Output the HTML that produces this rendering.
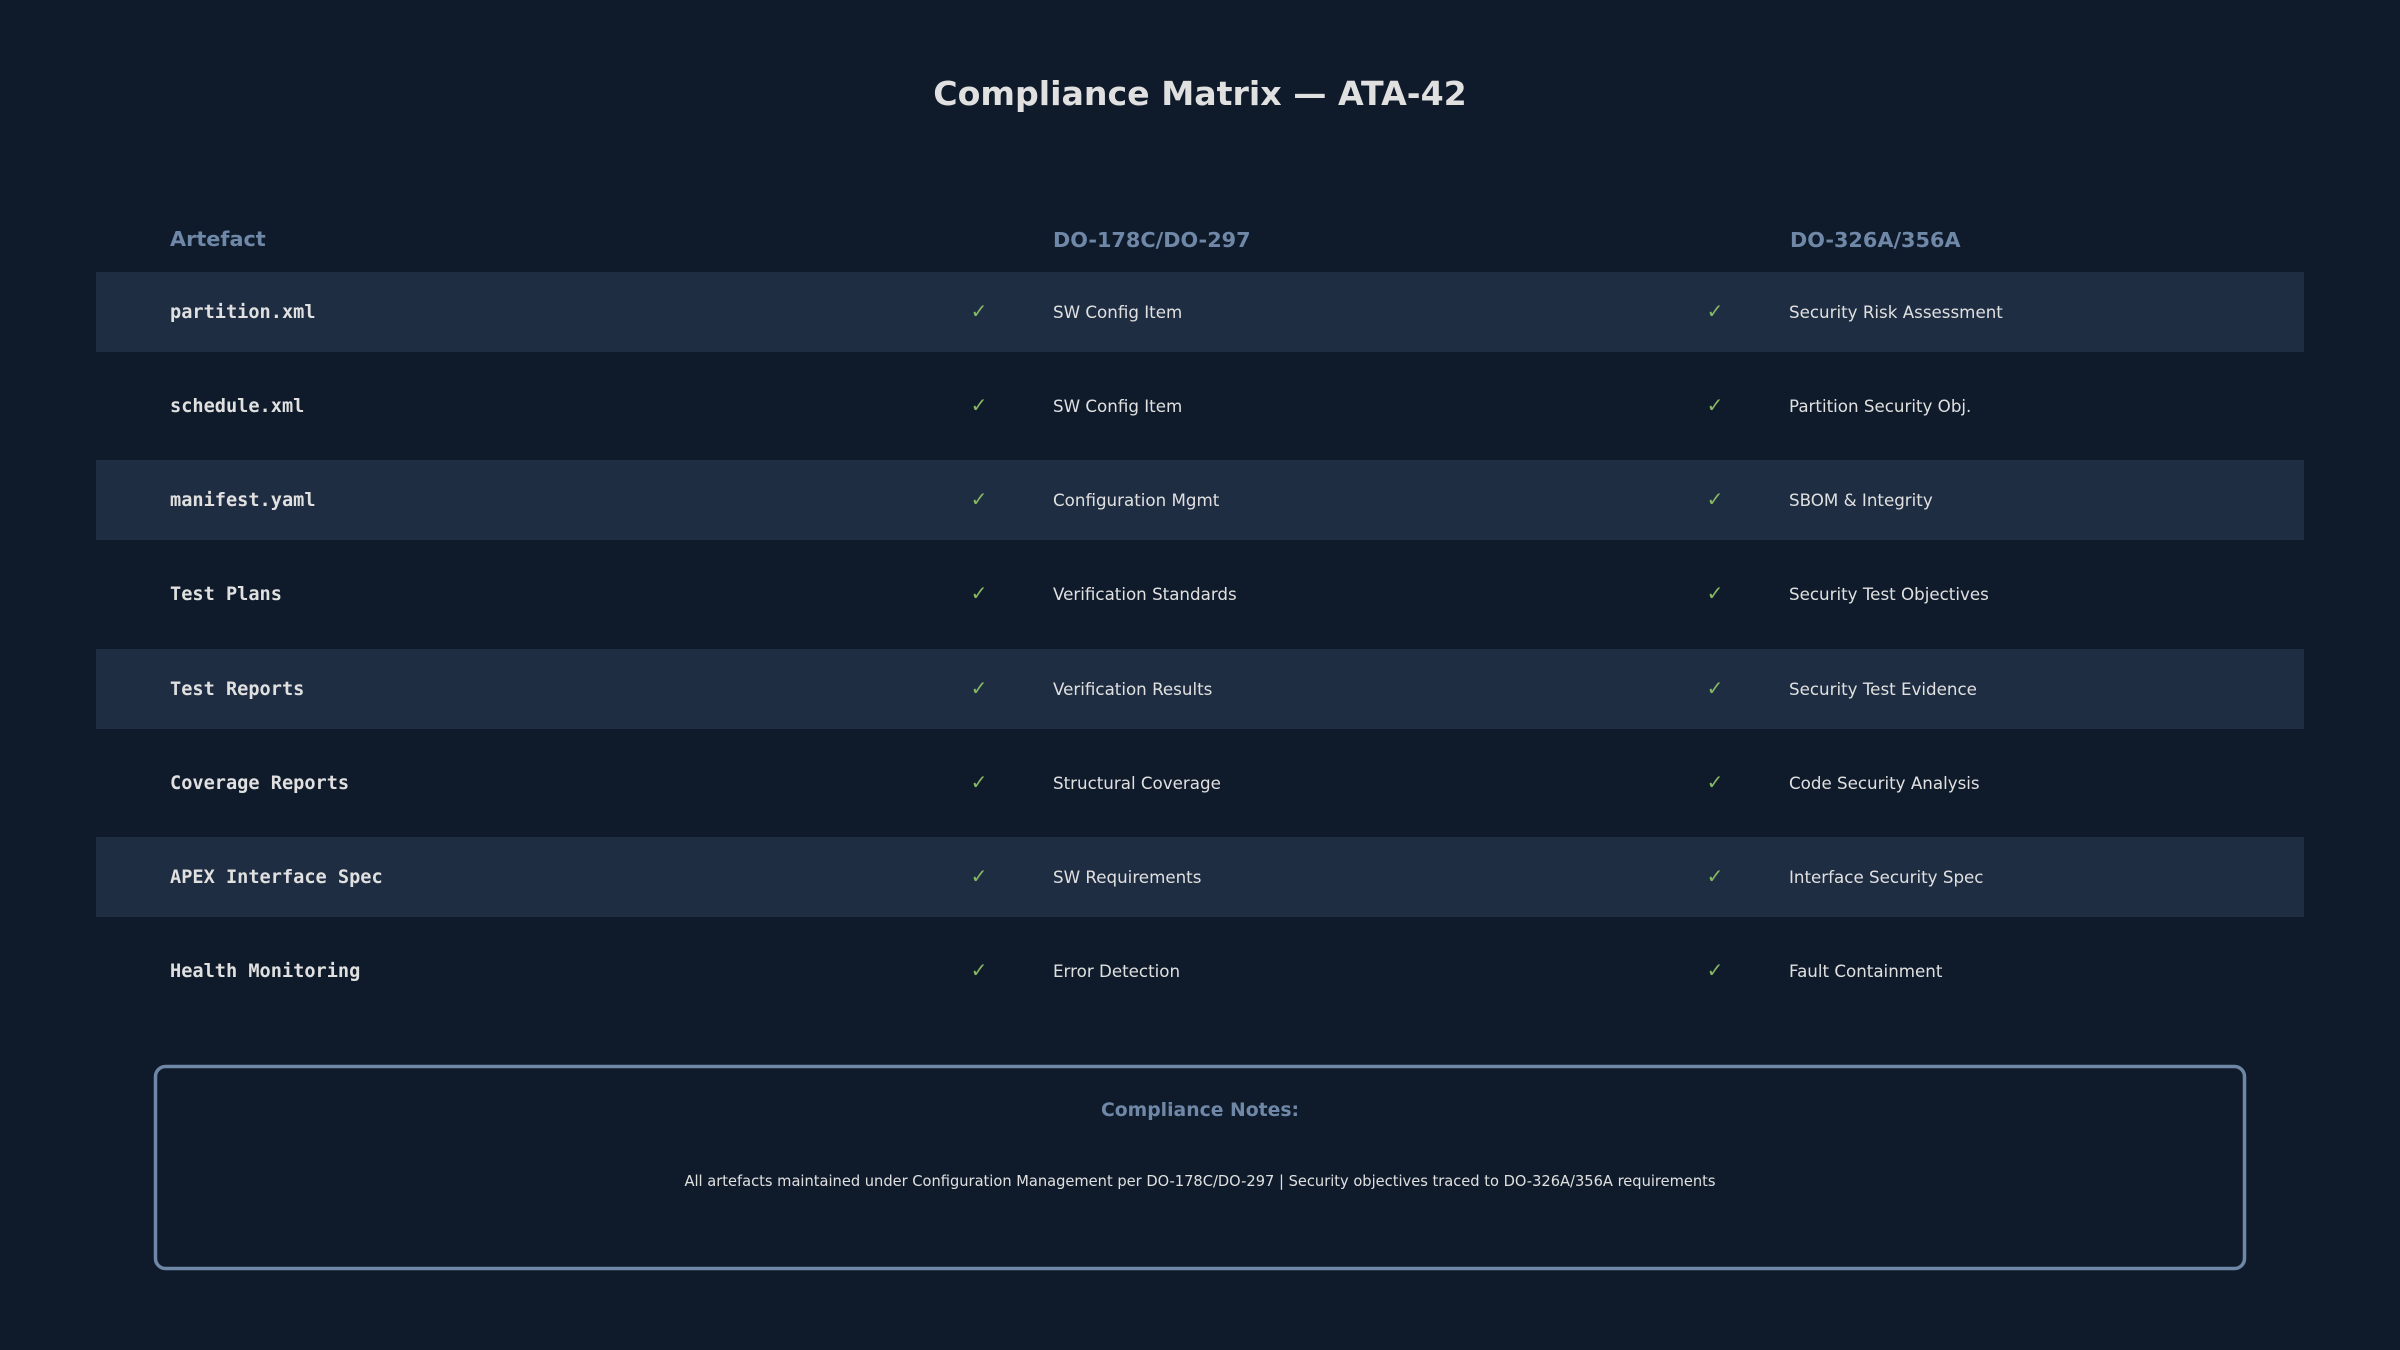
<!DOCTYPE html>
<html><head><meta charset="utf-8"><style>
html,body{margin:0;padding:0;background:#0f1b2b;}
svg{display:block}
</style></head><body>
<svg width="2400" height="1350" xmlns="http://www.w3.org/2000/svg" font-family="DejaVu Sans, sans-serif">
<rect width="2400" height="1350" fill="#0f1b2b"/>
<text x="1200" y="105" text-anchor="middle" font-size="33.2" font-weight="bold" fill="#e0e0e0">Compliance Matrix — ATA-42</text>
<g font-size="20.8" font-weight="bold" fill="#7088a8">
<text x="170" y="246">Artefact</text>
<text x="1053" y="247">DO-178C/DO-297</text>
<text x="1790" y="247">DO-326A/356A</text>
</g>
<g fill="#1e2d42">
<rect x="96" y="272" width="2208" height="80"/>
<rect x="96" y="460" width="2208" height="80"/>
<rect x="96" y="649" width="2208" height="80"/>
<rect x="96" y="837" width="2208" height="80"/>
</g>
<g font-size="16.7" fill="#e0e0e0">
<g font-family="DejaVu Sans Mono, monospace" font-weight="bold" font-size="18.6">
<text x="170" y="318">partition.xml</text>
<text x="170" y="412">schedule.xml</text>
<text x="170" y="506">manifest.yaml</text>
<text x="170" y="600">Test Plans</text>
<text x="170" y="695">Test Reports</text>
<text x="170" y="789">Coverage Reports</text>
<text x="170" y="883">APEX Interface Spec</text>
<text x="170" y="977">Health Monitoring</text>
</g>
<g fill="#86b862" text-anchor="middle" font-size="20">
<text x="979" y="318">✓</text><text x="1715" y="318">✓</text>
<text x="979" y="412">✓</text><text x="1715" y="412">✓</text>
<text x="979" y="506">✓</text><text x="1715" y="506">✓</text>
<text x="979" y="600">✓</text><text x="1715" y="600">✓</text>
<text x="979" y="695">✓</text><text x="1715" y="695">✓</text>
<text x="979" y="789">✓</text><text x="1715" y="789">✓</text>
<text x="979" y="883">✓</text><text x="1715" y="883">✓</text>
<text x="979" y="977">✓</text><text x="1715" y="977">✓</text>
</g>
<text x="1053" y="318">SW Config Item</text>
<text x="1053" y="412">SW Config Item</text>
<text x="1053" y="506">Configuration Mgmt</text>
<text x="1053" y="600">Verification Standards</text>
<text x="1053" y="695">Verification Results</text>
<text x="1053" y="789">Structural Coverage</text>
<text x="1053" y="883">SW Requirements</text>
<text x="1053" y="977">Error Detection</text>
<text x="1789" y="318">Security Risk Assessment</text>
<text x="1789" y="412">Partition Security Obj.</text>
<text x="1789" y="506">SBOM &amp; Integrity</text>
<text x="1789" y="600">Security Test Objectives</text>
<text x="1789" y="695">Security Test Evidence</text>
<text x="1789" y="789">Code Security Analysis</text>
<text x="1789" y="883">Interface Security Spec</text>
<text x="1789" y="977">Fault Containment</text>
</g>
<rect x="155.5" y="1066.5" width="2089" height="202" rx="10" fill="none" stroke="#7088a8" stroke-width="3.5"/>
<text x="1200" y="1116" text-anchor="middle" font-size="18.8" font-weight="bold" fill="#7088a8">Compliance Notes:</text>
<text x="1200" y="1186" text-anchor="middle" font-size="14.65" fill="#e0e0e0">All artefacts maintained under Configuration Management per DO-178C/DO-297 | Security objectives traced to DO-326A/356A requirements</text>
</svg>
</body></html>
